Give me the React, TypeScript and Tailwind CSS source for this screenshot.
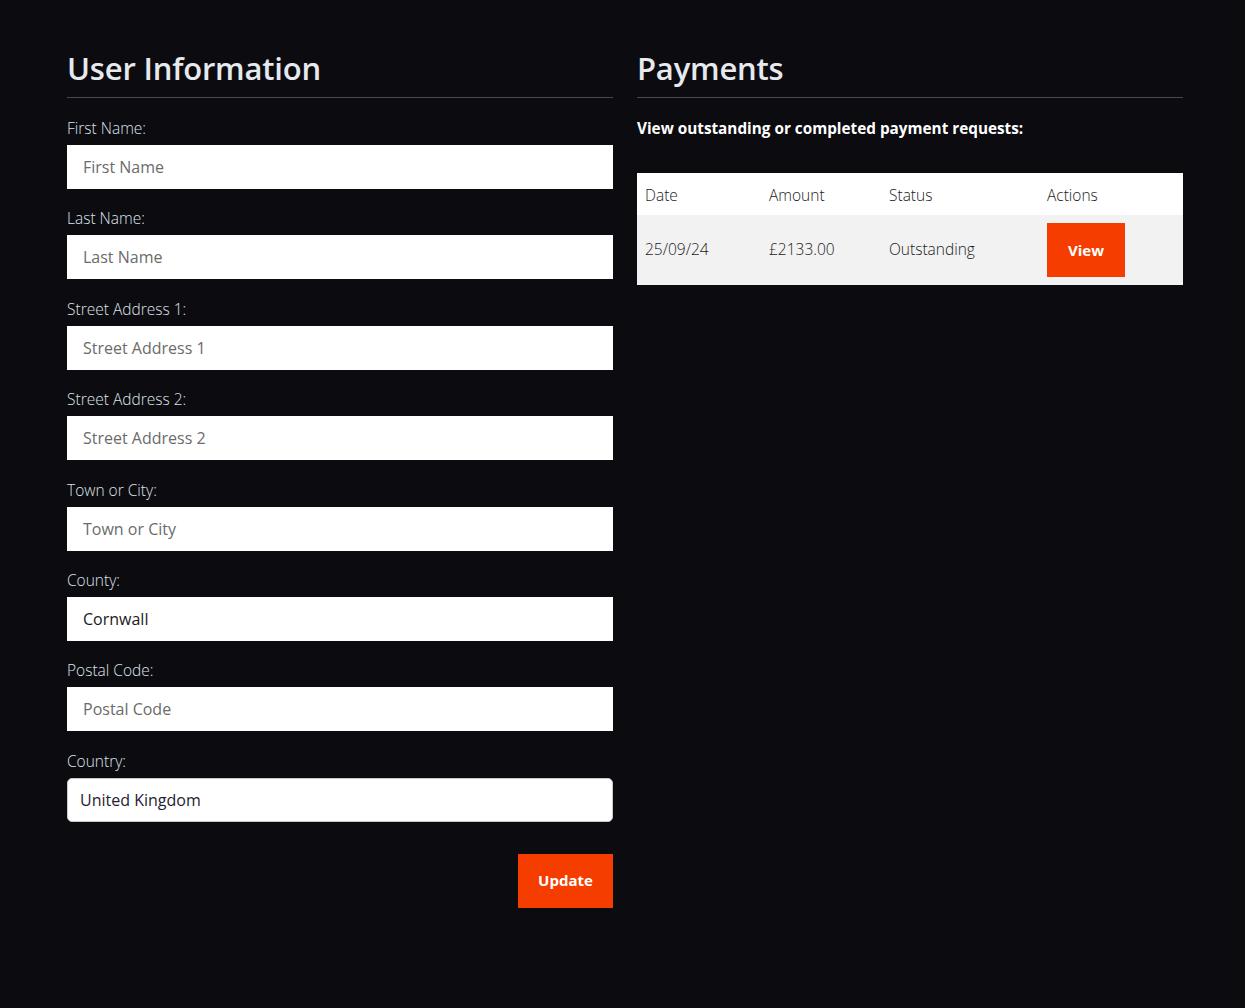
import React from "react";

const fields: { label: string; placeholder: string; value?: string }[] = [
  { label: "First Name:", placeholder: "First Name" },
  { label: "Last Name:", placeholder: "Last Name" },
  { label: "Street Address 1:", placeholder: "Street Address 1" },
  { label: "Street Address 2:", placeholder: "Street Address 2" },
  { label: "Town or City:", placeholder: "Town or City" },
  { label: "County:", placeholder: "County", value: "Cornwall" },
  { label: "Postal Code:", placeholder: "Postal Code" },
];

export default function App() {
  return (
    <div
      className="min-h-[1008px] w-full bg-[#0b0b10] text-[#e4e7ec]"
      style={{ fontFamily: '"Open Sans", "Noto Sans", sans-serif' }}
    >
      <div className="flex gap-[24px] pl-[67px] pt-[46px]">
        <div className="w-[546px] shrink-0">
          <h1 className="text-[31px] leading-[44px] font-semibold tracking-[-0.2px] text-[#e6e9ee]">User Information</h1>
          <div className="mt-[7px] h-px bg-[#48484f]" />
          <form className="mt-[19px]">
            {fields.map((f) => (
              <div key={f.label} className="mb-[18.4px]">
                <label className="block text-[15.5px] leading-[22px] font-light text-[#dfe3ea] mb-[6px]">{f.label}</label>
                <input
                  className="block h-[44px] w-full bg-white px-[16px] text-[16px] text-[#1a1a1a] placeholder:text-[#6b6b6b] outline-none"
                  placeholder={f.placeholder}
                  defaultValue={f.value}
                />
              </div>
            ))}
            <div>
              <label className="block text-[15.5px] leading-[22px] font-light text-[#dfe3ea] mb-[6px]">Country:</label>
              <div className="flex h-[44px] w-full items-center rounded-[5px] border border-[#c8c8cc] bg-white px-[12px] text-[16px] text-[#1d2330]">
                United Kingdom
              </div>
            </div>
            <div className="mt-[32px] flex justify-end">
              <button type="button" className="h-[54px] w-[95px] bg-[#f53d00] text-[15px] font-bold text-white">
                Update
              </button>
            </div>
          </form>
        </div>
        <div className="w-[546px] shrink-0">
          <h1 className="text-[31px] leading-[44px] font-semibold tracking-[-0.2px] text-[#e6e9ee]">Payments</h1>
          <div className="mt-[7px] h-px bg-[#48484f]" />
          <p className="mt-[19px] text-[15.3px] leading-[22px] font-bold text-white">View outstanding or completed payment requests:</p>
          <table className="mt-[34px] w-full border-collapse text-left text-[15.5px] text-[#1a1a1a]">
            <thead>
              <tr className="h-[42px] bg-white">
                <th className="w-[124px] px-[8px] pt-[3px] font-light">Date</th>
                <th className="w-[120px] px-[8px] pt-[3px] font-light">Amount</th>
                <th className="w-[158px] px-[8px] pt-[3px] font-light">Status</th>
                <th className="px-[8px] pt-[3px] font-light">Actions</th>
              </tr>
            </thead>
            <tbody>
              <tr className="h-[70px] bg-[#f2f2f2]">
                <td className="px-[8px] font-light">25/09/24</td>
                <td className="px-[8px] font-light">£2133.00</td>
                <td className="px-[8px] font-light">Outstanding</td>
                <td className="px-[8px]">
                  <button type="button" className="h-[54px] w-[78px] bg-[#f53d00] text-[15px] font-bold text-white">
                    View
                  </button>
                </td>
              </tr>
            </tbody>
          </table>
        </div>
      </div>
    </div>
  );
}
